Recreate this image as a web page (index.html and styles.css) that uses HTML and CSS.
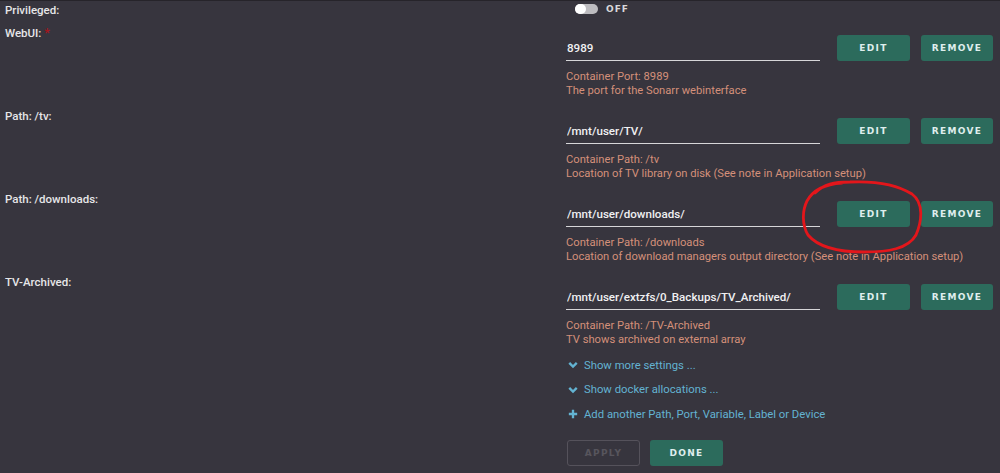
FILE: index.html
```html
<!DOCTYPE html>
<html lang="en">
<head>
    <meta charset="UTF-8">
    <meta name="viewport" content="width=device-width, initial-scale=1.0">
    <title>Container Settings</title>
    <link rel="stylesheet" href="styles.css">
</head>
<body>
    <div class="page">
        <div class="row row-top">
            <div class="label">Privileged:</div>
            <div class="switch">
                <span class="switch-track"><span class="switch-knob"></span></span>
                <span class="switch-text">OFF</span>
            </div>
        </div>

        <div class="row">
            <div class="label">WebUI: <span class="req">*</span></div>
            <div class="field">
                <div class="field-line">
                    <input class="path-input" type="text" value="8989">
                    <button class="btn">EDIT</button>
                    <button class="btn">REMOVE</button>
                </div>
                <div class="desc">Container Port: 8989<br>The port for the Sonarr webinterface</div>
            </div>
        </div>

        <div class="row">
            <div class="label">Path: /tv:</div>
            <div class="field">
                <div class="field-line">
                    <input class="path-input" type="text" value="/mnt/user/TV/">
                    <button class="btn">EDIT</button>
                    <button class="btn">REMOVE</button>
                </div>
                <div class="desc">Container Path: /tv<br>Location of TV library on disk (See note in Application setup)</div>
            </div>
        </div>

        <div class="row">
            <div class="label">Path: /downloads:</div>
            <div class="field">
                <div class="field-line">
                    <input class="path-input" type="text" value="/mnt/user/downloads/">
                    <button class="btn">EDIT</button>
                    <button class="btn">REMOVE</button>
                </div>
                <div class="desc">Container Path: /downloads<br>Location of download managers output directory (See note in Application setup)</div>
            </div>
        </div>

        <div class="row">
            <div class="label">TV-Archived:</div>
            <div class="field">
                <div class="field-line">
                    <input class="path-input" type="text" value="/mnt/user/extzfs/0_Backups/TV_Archived/">
                    <button class="btn">EDIT</button>
                    <button class="btn">REMOVE</button>
                </div>
                <div class="desc">Container Path: /TV-Archived<br>TV shows archived on external array</div>
            </div>
        </div>

        <div class="row">
            <div></div>
            <div class="links">
                <a class="link" href="#">
                    <svg class="icon" viewBox="0 0 12 12"><path d="M1.5 3.5 L6 8 L10.5 3.5" fill="none" stroke="currentColor" stroke-width="2.8"/></svg>
                    Show more settings ...
                </a>
                <a class="link" href="#">
                    <svg class="icon" viewBox="0 0 12 12"><path d="M1.5 3.5 L6 8 L10.5 3.5" fill="none" stroke="currentColor" stroke-width="2.8"/></svg>
                    Show docker allocations ...
                </a>
                <a class="link" href="#">
                    <svg class="icon" viewBox="0 0 12 12"><path d="M6 1 V11 M1 6 H11" fill="none" stroke="currentColor" stroke-width="2.8"/></svg>
                    Add another Path, Port, Variable, Label or Device
                </a>
                <div class="actions">
                    <button class="btn btn-disabled" disabled>APPLY</button>
                    <button class="btn">DONE</button>
                </div>
            </div>
        </div>

        <svg class="scribble" viewBox="0 0 126 76">
            <path d="M15 14 C24 5 34 3 50 3 C72 2 96 5 112 15 C124 24 122 42 116 56 C108 70 88 73 64 73 C40 73 18 68 8 56 C2 46 2 32 7 22 C13 11 26 5 42 4" fill="none" stroke="#e3161b" stroke-width="2.8" stroke-linecap="round"/>
        </svg>
    </div>
</body>
</html>
```

FILE: styles.css
```css
body {
    margin: 0;
    background-color: #37353e;
    font-family: Roboto, "Open Sans", sans-serif;
    color: #e4e4e6;
    border-top: 1px solid #26242a;
}
.page {
    position: relative;
    height: 472px;
    overflow: hidden;
}
.row {
    display: grid;
    grid-template-columns: 566px 1fr;
    margin-bottom: 9px;
}
.row-top {
    height: 18px;
    margin-bottom: 5px;
}
.label {
    padding-left: 5px;
    font-size: 11.5px;
    font-weight: 500;
    line-height: 18px;
    color: #e6e6e8;
}
.req {
    color: #a3161e;
    font-size: 13px;
    vertical-align: top;
}
.switch {
    display: flex;
    align-items: center;
    gap: 8px;
    padding-left: 9px;
    height: 16px;
}
.switch-track {
    display: flex;
    width: 23px;
    height: 10px;
    border-radius: 5px;
    background-color: #bdbcc0;
}
.switch-knob {
    width: 11px;
    height: 10px;
    border-radius: 5px;
    background-color: #ffffff;
}
.switch-text {
    font-family: "DejaVu Sans", sans-serif;
    font-size: 9px;
    font-weight: 700;
    letter-spacing: 1px;
    color: #d8d8da;
}
.field-line {
    display: flex;
    align-items: center;
    margin-top: 11px;
    height: 26px;
}
.path-input {
    box-sizing: border-box;
    width: 254px;
    height: 26px;
    margin-right: 17px;
    padding: 0 1px;
    border: none;
    border-bottom: 1px solid #d6d6d8;
    background: transparent;
    font-family: inherit;
    font-size: 11.6px;
    font-weight: 500;
    color: #f0f0f2;
    outline: none;
}
.btn {
    box-sizing: border-box;
    width: 73px;
    height: 26px;
    margin-right: 11px;
    padding: 0;
    border: none;
    border-radius: 3px;
    background-color: #2c6b5c;
    font-family: "DejaVu Sans", sans-serif;
    font-size: 9px;
    font-weight: 700;
    letter-spacing: 1.3px;
    color: #dfeeed;
    cursor: pointer;
}
.btn + .btn {
    width: 72px;
}
.desc {
    margin-top: 9px;
    font-size: 11.2px;
    line-height: 14px;
    color: #d4907a;
}
.links {
    display: flex;
    flex-direction: column;
    margin-top: -3px;
}
.link {
    display: flex;
    align-items: center;
    gap: 6px;
    height: 24.5px;
    padding-left: 2px;
    font-size: 11.3px;
    color: #63b3d2;
    text-decoration: none;
}
.icon {
    width: 10px;
    height: 10px;
}
.actions {
    display: flex;
    margin-top: 13px;
    padding-left: 1px;
}
.actions .btn {
    width: 73px;
}
.btn-disabled {
    border: 1px solid #55525b;
    background-color: transparent;
    color: #57555d;
    margin-right: 10px;
    cursor: default;
}
.scribble {
    position: absolute;
    left: 800px;
    top: 178px;
    width: 126px;
    height: 76px;
}
```
